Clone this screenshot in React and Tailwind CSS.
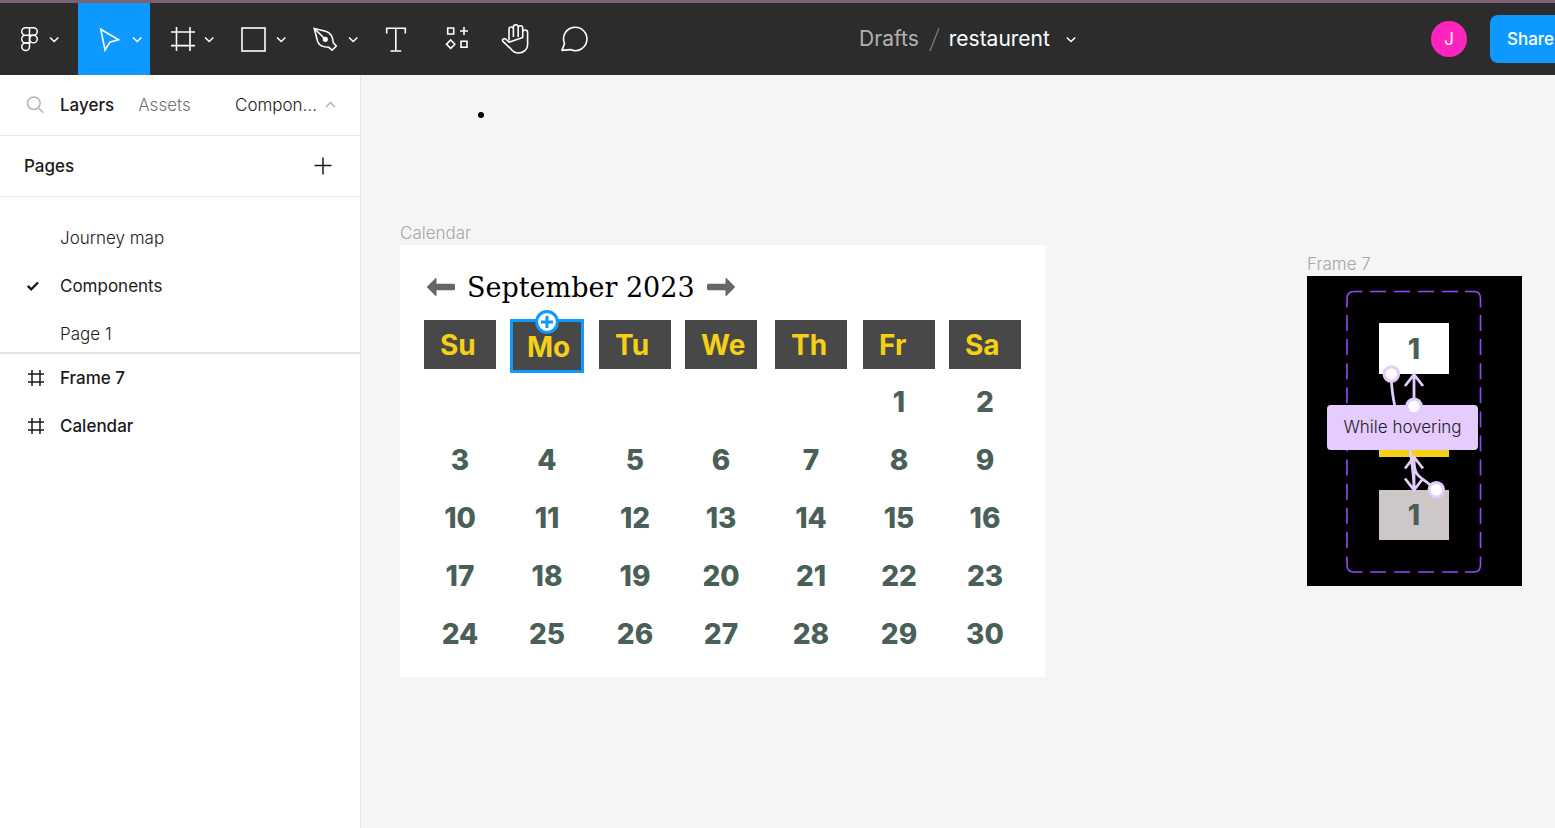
import React from "react";

const CHEVRON = "M55 34.5l4.2 4 4.2-4";

function Tool({ label, width, active, children }) {
  return (
    <button
      type="button"
      aria-label={label}
      className={`h-[72px] shrink-0 text-white ${active ? "bg-[#0d99ff]" : "bg-transparent"}`}
    >
      <svg
        width={width}
        height="72"
        viewBox={`0 0 ${width} 72`}
        fill="none"
        stroke="currentColor"
        strokeWidth="1.6"
        aria-hidden="true"
      >
        {children}
      </svg>
    </button>
  );
}

function Toolbar() {
  return (
    <header className="flex items-center border-t-[3px] border-[#7c6073] bg-[#2c2c2c] text-white">
      <div className="flex shrink-0">
        <Tool label="Main menu" width={78}>
          <g strokeWidth="1.5">
            <path d="M29.5 24.7h-4a3.75 3.75 0 0 0 0 7.5h4zM29.5 24.7h4a3.75 3.75 0 0 1 0 7.5h-4zM29.5 32.2h-4a3.85 3.85 0 0 0 0 7.7h4z" />
            <circle cx="33.4" cy="36" r="3.85" />
            <path d="M29.5 39.9h-4a3.85 3.85 0 1 0 4 3.8z" />
          </g>
          <path d="M50 34.5l4.2 4 4.2-4" />
        </Tool>
        <Tool label="Move" width={72} active>
          <path d="M22.8 26.3L40.5 36.8L31.8 39.3L27 47z" />
          <path d={CHEVRON} />
        </Tool>
        <Tool label="Frame" width={72}>
          <path d="M26.5 24v24M40 24v24M21 29h24M21 42.6h24" />
          <path d={CHEVRON} />
        </Tool>
        <Tool label="Rectangle" width={72}>
          <rect x="20" y="25" width="23" height="23" />
          <path d={CHEVRON} />
        </Tool>
        <Tool label="Pen" width={72}>
          <path d="M20.3 25.5L31.5 28.2C35.5 29.3 38.8 33.2 39.3 39.7L42.3 43L38.1 47.2L34.8 44.3C29 44.3 25.5 43.2 23.7 38.8z" />
          <path d="M20.3 25.5l11 10.8" />
          <circle cx="31.3" cy="36.3" r="1.8" fill="currentColor" />
          <path d={CHEVRON} />
        </Tool>
        <Tool label="Text" width={60}>
          <path d="M20.7 30.5v-5.2h18.6v5.2M29.8 25.3v22.5M24.5 48h10.8" />
        </Tool>
        <Tool label="Resources" width={61}>
          <path d="M21.7 25h6v6h-6zM35 38.3h6v6h-6zM38 24v8M34 28h8M24.7 37l4.2 4.2l-4.2 4.2l-4.2-4.2z" />
        </Tool>
        <Tool label="Hand" width={59}>
          <path
            d="M22 37.5V26.2a2.2 2.2 0 0 1 4.4 0V34M26.4 34V24.2a2.4 2.4 0 0 1 4.8 0V34M31.2 34V25a2.2 2.2 0 0 1 4.5 0V34.5M35.7 34.5V29.4a2.4 2.4 0 0 1 4.9 0V42C40.6 46.5 36.5 50 31.5 50C27.5 50 25.5 48 23.7 45.7L16.2 38.7C14.4 36.6 16.8 34.7 18.9 36.2L22 39.2z"
            strokeLinejoin="round"
          />
        </Tool>
        <Tool label="Comment" width={60}>
          <path d="M18.5 40.6A11.7 11.7 0 1 1 24.4 46.6L16 47.4z" strokeLinejoin="round" />
        </Tool>
      </div>

      <div className="flex flex-1 items-center justify-center pr-[102px] text-[21px]">
        <a href="#drafts" className="text-[#b3b3b3]">
          Drafts
        </a>
        <svg width="30" height="28" viewBox="0 0 30 28" stroke="#7a7a7a" strokeWidth="1.3" aria-hidden="true">
          <path d="M11 26L20 3" />
        </svg>
        <button type="button" className="flex items-center gap-4">
          restaurent
          <svg width="10" height="8" viewBox="0 0 10 8" fill="none" stroke="currentColor" strokeWidth="1.6" aria-hidden="true">
            <path d="M0.8 2.5l4.2 4 4.2-4" />
          </svg>
        </button>
      </div>

      <div className="flex shrink-0 items-center gap-[23px]">
        <span className="flex size-9 items-center justify-center rounded-full bg-[#ff24bd] pt-0.5 text-[17px]">J</span>
        <button type="button" className="h-12 w-[65px] rounded-l-lg bg-[#0d99ff] pt-0.5 pl-[17px] text-left text-[17px] font-medium">
          Share
        </button>
      </div>
    </header>
  );
}

function HashIcon() {
  return (
    <svg width="18" height="18" viewBox="0 0 18 18" stroke="currentColor" strokeWidth="1.5" aria-hidden="true">
      <path d="M5 1v16M13 1v16M1 5h16M1 13h16" />
    </svg>
  );
}

function Sidebar() {
  return (
    <aside className="w-[361px] shrink-0 border-r border-[#e5e5e5] bg-white text-[17px] text-[#1a1a1a]">
      <div className="flex h-[61px] items-center border-b border-[#e5e5e5] pr-6 pl-6">
        <button type="button" aria-label="Search" className="mr-3 w-6 text-[#b3b3b3]">
          <svg width="22" height="22" viewBox="0 0 22 22" fill="none" stroke="currentColor" strokeWidth="1.5" aria-hidden="true">
            <circle cx="9.8" cy="9.2" r="6.3" />
            <path d="M14.3 13.7l5 5" />
          </svg>
        </button>
        <button type="button" className="pt-0.5 font-medium">Layers</button>
        <button type="button" className="ml-6 pt-0.5 font-light text-[#737373]">Assets</button>
        <button type="button" className="ml-auto flex items-center gap-2 font-light text-[#1a1a1a]">
          <span className="pt-0.5">Compon...</span>
          <svg width="11" height="8" viewBox="0 0 11 8" fill="none" stroke="#b3b3b3" strokeWidth="1.5" aria-hidden="true">
            <path d="M1 6l4.5-4.5L10 6" />
          </svg>
        </button>
      </div>

      <div className="flex h-[61px] items-center justify-between border-b border-[#e5e5e5] pr-7 pl-6">
        <h2 className="pt-0.5 font-medium">Pages</h2>
        <button type="button" aria-label="Add page">
          <svg width="18" height="18" viewBox="0 0 18 18" stroke="currentColor" strokeWidth="1.5" aria-hidden="true">
            <path d="M9 0.5v17M0.5 8.5h17" />
          </svg>
        </button>
      </div>

      <nav aria-label="Pages" className="h-[157px] overflow-hidden border-b-2 border-[#e5e5e5] pt-[17px]">
        {["Journey map", "Components", "Page 1"].map((name) => {
          const current = name === "Components";
          return (
            <button
              key={name}
              type="button"
              className={`flex h-12 w-full items-center pl-[26px] text-left ${current ? "font-normal" : "font-light"}`}
            >
              <span className="w-[34px]">
                {current && (
                  <svg width="14" height="12" viewBox="0 0 14 12" fill="none" stroke="currentColor" strokeWidth="2.4" aria-hidden="true">
                    <path d="M1.8 5.8l3.4 3.5L12 2.5" />
                  </svg>
                )}
              </span>
              <span className="pt-0.5">{name}</span>
            </button>
          );
        })}
      </nav>

      <ul>
        {["Frame 7", "Calendar"].map((name) => (
          <li key={name}>
            <button type="button" className="flex h-12 w-full items-center gap-[15px] pl-[27px] font-medium">
              <HashIcon />
              <span className="pt-0.5">{name}</span>
            </button>
          </li>
        ))}
      </ul>
    </aside>
  );
}

const DAYS = ["Su", "Mo", "Tu", "We", "Th", "Fr", "Sa"];
const WEEKS = [
  ["", "", "", "", "", 1, 2],
  [3, 4, 5, 6, 7, 8, 9],
  [10, 11, 12, 13, 14, 15, 16],
  [17, 18, 19, 20, 21, 22, 23],
  [24, 25, 26, 27, 28, 29, 30],
];

function ArrowIcon({ flip }) {
  return (
    <svg width="30" height="20" viewBox="0 0 30 20" fill="#666" aria-hidden="true">
      <path
        d={
          flip
            ? "M2.5 6.8H19.5V1.8Q19.5 0.4 20.6 1.3L28.8 9.4Q29.4 10 28.8 10.6L20.6 18.7Q19.5 19.6 19.5 18.2V13.2H2.5Q1 13.2 1 11.7V8.3Q1 6.8 2.5 6.8z"
            : "M27.5 6.8H10.5V1.8Q10.5 0.4 9.4 1.3L1.2 9.4Q0.6 10 1.2 10.6L9.4 18.7Q10.5 19.6 10.5 18.2V13.2H27.5Q29 13.2 29 11.7V8.3Q29 6.8 27.5 6.8z"
        }
      />
    </svg>
  );
}

function DayHeader({ day }) {
  const selected = day === "Mo";
  return (
    <div className={`relative flex w-[72px] items-center bg-[#484848] pl-4 text-[#f5d015] ${selected ? "h-[51px] pt-0.5" : "h-[49px]"}`}>
      {day}
      {selected && (
        <>
          <span className="absolute -inset-x-px -top-px -bottom-0.5 border-[3px] border-[#0d99ff]" />
          <svg className="absolute -top-[10px] left-6" width="24" height="24" viewBox="0 0 24 24" fill="#fff" stroke="#0d99ff" strokeWidth="3" aria-hidden="true">
            <circle cx="12" cy="12" r="10.4" />
            <path d="M12 6v12M6 12h12" />
          </svg>
        </>
      )}
    </div>
  );
}

function CalendarFrame() {
  return (
    <section className="absolute top-[145px] left-[39px]">
      <h2 className="h-[25px] pt-px text-[17px] leading-6 font-light text-[#a6a6a6]">Calendar</h2>
      <div className="w-[645px] bg-white px-6 pt-[22px] pb-[14px]">
        <div className="flex h-10 items-center gap-[11px] pl-0.5">
          <button type="button" aria-label="Previous month"><ArrowIcon /></button>
          <h3 className="pt-0.5 font-['DejaVu_Serif',serif] text-[27px] text-black">September 2023</h3>
          <button type="button" aria-label="Next month"><ArrowIcon flip /></button>
        </div>
        <table className="mt-[13px] table-fixed border-collapse text-[28px] font-extrabold">
          <colgroup>
            <col className="w-[87px]" />
            <col className="w-[88px]" />
            <col className="w-[86px]" />
            <col className="w-[90px]" />
            <col className="w-[88px]" />
            <col className="w-[86px]" />
            <col className="w-[72px]" />
          </colgroup>
          <thead>
            <tr className="h-[53px]">
              {DAYS.map((day) => (
                <th key={day} scope="col" className="p-0 text-left align-top">
                  <DayHeader day={day} />
                </th>
              ))}
            </tr>
          </thead>
          <tbody className="text-[#4a5f57]">
            {WEEKS.map((week, i) => (
              <tr key={i} className="h-[58px]">
                {week.map((date, j) => (
                  <td key={j} className="p-0">
                    <div className="w-[72px] text-center">{date}</div>
                  </td>
                ))}
              </tr>
            ))}
          </tbody>
        </table>
      </div>
    </section>
  );
}

function ComponentFrame() {
  return (
    <section className="absolute top-[176px] left-[946px]">
      <h2 className="h-[25px] pt-px text-[17px] leading-6 font-light text-[#a6a6a6]">Frame 7</h2>
      <div className="relative flex h-[310px] w-[215px] flex-col items-center gap-[33px] bg-black pt-[47px] pr-px text-[28px] font-extrabold text-[#4a5f57]">
        <div className="flex h-[51px] w-[70px] items-center justify-center bg-white">1</div>
        <div className="h-[50px] w-[70px] bg-[#f5d015]" />
        <div className="flex h-[50px] w-[70px] items-center justify-center bg-[#cec7c7]">1</div>
        <svg className="absolute inset-0" width="215" height="310" viewBox="0 0 215 310" fill="none" aria-hidden="true">
          <g stroke="#9747ff" strokeWidth="1.6">
            <path d="M55.5 15.5H47Q40 15.5 40 22.5V31.5M158 15.5H167Q173.5 15.5 173.5 22.5V31.5M55.5 296H47Q40 296 40 289V280.5M158 296H167Q173.5 296 173.5 289V280.5" />
            <path d="M63 15.5H151.5M63 296H151.5" strokeDasharray="16 8" />
            <path d="M40 39V272.5M173.5 39V272.5" strokeDasharray="16 8.1" />
          </g>
          <g stroke="#e4ccff" strokeWidth="2.8">
            <path d="M84 98C84.5 113 86 122 88 131" />
            <path d="M107 130V99M98 110L107 98.5L116 110" />
            <path d="M103 173C105 188 107 200 107 213M107 213V182M98 192.5L107 181L116 192.5M98 202.5L107 214L116 202.5M107 182C107 202 112 199 127 212" />
          </g>
        </svg>
        <div className="absolute top-[129px] left-5 flex h-[45px] w-[151px] items-center justify-center rounded bg-[#e4ccff] text-[17px] font-light text-[#1f1b24]">
          While hovering
        </div>
        <svg className="absolute inset-0" width="215" height="310" viewBox="0 0 215 310" fill="#fff" stroke="#e4ccff" strokeWidth="3" aria-hidden="true">
          <circle cx="84.3" cy="98" r="7.3" />
          <circle cx="107" cy="130.3" r="7.3" />
          <circle cx="129.3" cy="213.8" r="7.3" />
        </svg>
      </div>
    </section>
  );
}

export default function App() {
  return (
    <div className="flex min-h-screen flex-col overflow-x-hidden font-['Inter',sans-serif]">
      <Toolbar />
      <div className="flex flex-1">
        <Sidebar />
        <main className="relative min-w-0 flex-1 bg-[#f5f5f5]">
          <span className="absolute top-[37px] left-[117px] size-1.5 rounded-full bg-black" />
          <CalendarFrame />
          <ComponentFrame />
        </main>
      </div>
    </div>
  );
}
